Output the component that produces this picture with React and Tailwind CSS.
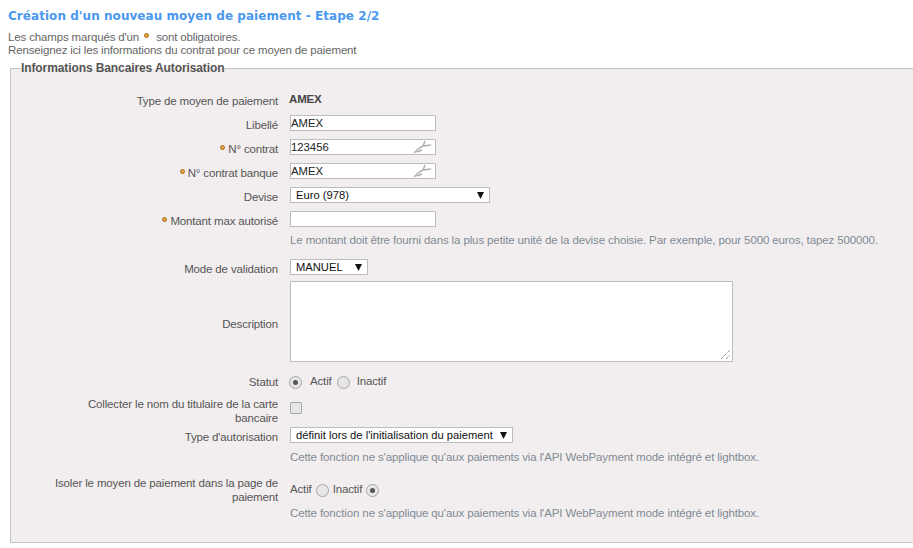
const Dot = () => (
  <span className="inline-block w-[3px] h-[3px] rounded-full bg-[#e8a33d] border border-[#a5701f] box-content mr-[3px] mb-[4px] align-middle" />
)

const Key = () => (
  <svg width="20" height="14" viewBox="0 0 20 14" className="absolute right-[3px] top-[0px]" fill="none">
    <path d="M2 13 L6 9 L11 6 L13 1 M11 6 L19 5 M5 12 L10 10" stroke="#b0b0b0" strokeWidth="1.5" />
  </svg>
)

const Arrow = () => (
  <svg width="7" height="7" viewBox="0 0 7 7" className="shrink-0"><path d="M0 0H7L3.5 7Z" fill="#111" /></svg>
)

function Row({ label, required, className = '', labelClass = 'pt-[3px]', children }) {
  return (
    <div className={`flex ${className}`}>
      <div className={`w-[267px] shrink-0 text-right leading-[14px] pl-[42px] ${labelClass}`}>
        {required && <Dot />}{label}
      </div>
      <div className="ml-[12px] flex-1">{children}</div>
    </div>
  )
}

function Input({ value, keyed }) {
  return (
    <div className="relative w-[146px] h-[16px] bg-white border border-[#bdbdbd] text-[#222] leading-[15px] tracking-normal font-['Liberation_Sans',sans-serif] text-[11.3px]">
      {value}
      {keyed && <Key />}
    </div>
  )
}

function Select({ width, children }) {
  return (
    <div className={`flex items-center justify-between h-[16px] bg-white border border-[#bdbdbd] pl-[5px] pr-[5px] pt-[1px] text-[#111] tracking-normal font-['Liberation_Sans',sans-serif] text-[11.2px] leading-none whitespace-nowrap ${width}`}>
      <span>{children}</span>
      <Arrow />
    </div>
  )
}

function Radio({ checked, className = '' }) {
  return (
    <span className={`inline-flex items-center justify-center w-[13px] h-[13px] rounded-full border border-[#a5a5a5] bg-[#e6e6e6] ${className}`}>
      {checked && <span className="w-[5px] h-[5px] rounded-full bg-[#555]" />}
    </span>
  )
}

const Help = ({ children, className = '' }) => (
  <p className={`text-[#7f8a94] leading-[14px] tracking-[-0.12px] whitespace-nowrap ${className}`}>{children}</p>
)

export default function App() {
  return (
    <div className="w-[913px] h-[548px] overflow-hidden bg-white pt-[7px] text-[11.5px] tracking-[-0.15px] text-[#555] font-['Liberation_Sans',sans-serif]">
      <h1 className="ml-[8px] text-[12px] leading-[18px] font-bold tracking-[0.05px] text-[#4a98f0] font-['DejaVu_Sans',sans-serif]">
        Création d'un nouveau moyen de paiement - Etape 2/2
      </h1>
      <p className="ml-[8px] mt-[6px] leading-[13px] text-[#666]">
        Les champs marqués d'un <span className="ml-[2px]"><Dot /></span><span className="ml-[4px]">sont obligatoires.</span>
      </p>
      <p className="ml-[8px] leading-[13px] text-[#666]">
        Renseignez ici les informations du contrat pour ce moyen de paiement
      </p>
      <fieldset className="ml-[10px] mt-[4px] w-[920px] h-[482px] border border-[#c4c4c4] bg-[#f2eeef] px-0 pt-[15px]">
        <legend className="ml-[10px] font-bold text-[12px] tracking-[-0.1px] leading-[14px] text-[#555]">Informations Bancaires Autorisation</legend>
        <div className="w-[740px]">
          <Row label="Type de moyen de paiement" className="h-[25px] pt-[1px]">
            <b className="relative -left-[1px] text-[11.5px] text-[#444]">AMEX</b>
          </Row>
          <Row label="Libellé" className="h-[24px]"><Input value="AMEX" /></Row>
          <Row label="N° contrat" required className="h-[24px]"><Input value="123456" keyed /></Row>
          <Row label="N° contrat banque" required className="h-[24px]"><Input value="AMEX" keyed /></Row>
          <Row label="Devise" className="h-[24px]"><Select width="w-[200px]">Euro (978)</Select></Row>
          <Row label="Montant max autorisé" required className="h-[48px]">
            <Input value="" />
            <Help className="mt-[6px]">Le montant doit être fourni dans la plus petite unité de la devise choisie. Par exemple, pour 5000 euros, tapez 500000.</Help>
          </Row>
          <Row label="Mode de validation" className="h-[22px]"><Select width="w-[78px]">MANUEL</Select></Row>
          <Row label="Description" className="h-[93px]" labelClass="pt-[36px]">
            <div className="relative w-[443px] h-[81px] bg-white border border-[#bdbdbd]">
              <svg width="11" height="11" viewBox="0 0 11 11" className="absolute right-[1px] bottom-[1px]" stroke="#666" strokeDasharray="1 1">
                <path d="M1 10 L10 1 M6 10 L10 6" />
              </svg>
            </div>
          </Row>
          <Row label="Statut" className="h-[23px]" labelClass="pt-[1px]">
            <div className="flex items-center h-[16px] -ml-[1px]">
              <Radio checked />
              <span className="ml-[8px]">Actif</span>
              <Radio className="ml-[5px]" />
              <span className="ml-[7px]">Inactif</span>
            </div>
          </Row>
          <Row label="Collecter le nom du titulaire de la carte bancaire" className="h-[30px]" labelClass="pt-0">
            <span className="block mt-[5px] w-[12px] h-[12px] rounded-[2px] border border-[#a5a5a5] bg-[#e6e6e6]" />
          </Row>
          <Row label="Type d'autorisation" className="h-[49px]">
            <Select width="w-[223px]">définit lors de l'initialisation du paiement</Select>
            <Help className="mt-[7px]">Cette fonction ne s'applique qu'aux paiements via l'API WebPayment mode intégré et lightbox.</Help>
          </Row>
          <Row label="Isoler le moyen de paiement dans la page de paiement" labelClass="pt-0">
            <div className="flex items-center h-[16px] mt-[6px]">
              <span>Actif</span>
              <Radio className="ml-[4px]" />
              <span className="ml-[4px]">Inactif</span>
              <Radio checked className="ml-[4px] mt-[1px]" />
            </div>
            <Help className="mt-[8px]">Cette fonction ne s'applique qu'aux paiements via l'API WebPayment mode intégré et lightbox.</Help>
          </Row>
        </div>
      </fieldset>
    </div>
  )
}
